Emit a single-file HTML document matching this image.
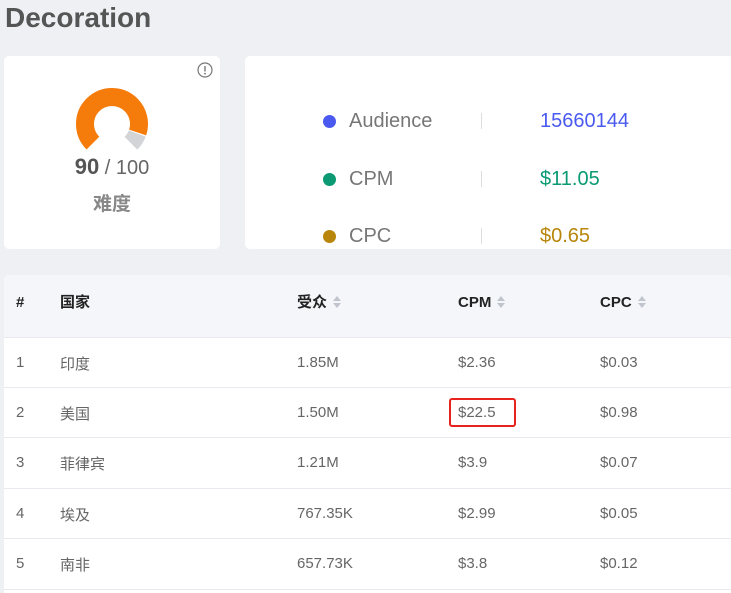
<!DOCTYPE html>
<html><head><meta charset="utf-8"><style>
*{margin:0;padding:0;box-sizing:border-box}
html,body{width:731px;height:593px;overflow:hidden}
body{background:#eef0f4;font-family:"Liberation Sans","Noto Sans CJK SC",sans-serif;position:relative;color:#555}
.abs{position:absolute}
.card{position:absolute;background:#fff;border-radius:5px}
h1{position:absolute;left:5px;top:2px;font-size:28px;font-weight:bold;color:#555;line-height:32px}
.lab{position:absolute;left:104px;font-size:20px;color:#777;line-height:24px}
.dot{position:absolute;left:78px;width:13px;height:13px;border-radius:50%}
.sep{position:absolute;left:236px;width:1px;height:16px;background:#ddd}
.val{position:absolute;left:295px;font-size:20px;line-height:24px}
.row{position:absolute;left:0;width:727px;height:50px;border-top:1px solid #e8eaf0;font-size:15px;color:#666}
.row span,.hd span{position:absolute;top:15px;line-height:20px}
.row span.c{top:17px}
.hd{position:absolute;left:0;top:0;width:727px;height:62px;background:#f5f6fa;border-radius:5px 5px 0 0;font-size:15px;font-weight:bold;color:#222}
.hd span{top:18px}
.sort{display:inline-block;vertical-align:middle;margin-left:5px;width:10px;height:14px;position:relative;top:-1px}
</style></head><body>
<h1>Decoration</h1>
<div class="card" style="left:4px;top:56px;width:216px;height:193px">
 <svg class="abs" style="left:193px;top:6px" width="16" height="16" viewBox="0 0 16 16"><circle cx="8" cy="8" r="7" fill="none" stroke="#777" stroke-width="1.2"/><line x1="8" y1="4" x2="8" y2="9.5" stroke="#777" stroke-width="1.4"/><circle cx="8" cy="11.7" r="0.9" fill="#777"/></svg>
 <svg class="abs" style="left:71px;top:31px" width="74" height="74" viewBox="0 0 74 74">
  <g transform="rotate(135 37 37)">
   <circle cx="37" cy="37" r="27" fill="none" stroke="#f57c0a" stroke-width="18" stroke-dasharray="114.5 300"/>
   <circle cx="37" cy="37" r="27" fill="none" stroke="#d3d4d8" stroke-width="18" stroke-dasharray="0 115.5 11.7 300"/>
  </g>
 </svg>
 <div class="abs" style="left:0;width:216px;top:99px;text-align:center;font-size:20px;color:#666;line-height:24px"><b style="font-size:22px;color:#555">90</b> / 100</div>
 <div class="abs" style="left:0;width:216px;top:137px;text-align:center;font-size:19px;font-weight:bold;color:#888;line-height:24px">难度</div>
</div>
<div class="card" style="left:245px;top:56px;width:486px;height:193px;border-radius:5px 0 0 5px">
 <div class="dot" style="top:59px;background:#4a5af0"></div><div class="lab" style="top:53px">Audience</div><div class="sep" style="top:57px"></div><div class="val" style="top:53px;color:#4a5af0">15660144</div>
 <div class="dot" style="top:117px;background:#0b9a73"></div><div class="lab" style="top:111px">CPM</div><div class="sep" style="top:115px"></div><div class="val" style="top:111px;color:#0b9a73">$11.05</div>
 <div class="dot" style="top:174px;background:#b8860b"></div><div class="lab" style="top:168px">CPC</div><div class="sep" style="top:172px"></div><div class="val" style="top:168px;color:#b8860b">$0.65</div>
</div>
<div class="card" style="left:4px;top:275px;width:727px;height:318px;border-radius:5px 5px 0 0;overflow:hidden">
 <div class="hd"><span style="left:12px">#</span><span style="left:56px">国家</span>
  <span style="left:293px">受众<svg class="sort" viewBox="0 0 10 14"><path d="M1 6L5 1L9 6Z M1 8L5 13L9 8Z" fill="#c0c4cc"/></svg></span>
  <span style="left:454px">CPM<svg class="sort" viewBox="0 0 10 14"><path d="M1 6L5 1L9 6Z M1 8L5 13L9 8Z" fill="#c0c4cc"/></svg></span>
  <span style="left:596px">CPC<svg class="sort" viewBox="0 0 10 14"><path d="M1 6L5 1L9 6Z M1 8L5 13L9 8Z" fill="#c0c4cc"/></svg></span></div>
 <div class="row" style="top:62px"><span style="left:12px">1</span><span class="c" style="left:56px">印度</span><span style="left:293px">1.85M</span><span style="left:454px">$2.36</span><span style="left:596px">$0.03</span></div>
 <div class="row" style="top:112px"><span style="left:12px">2</span><span class="c" style="left:56px">美国</span><span style="left:293px">1.50M</span><span style="left:454px">$22.5</span><span style="left:596px">$0.98</span>
  <div class="abs" style="left:445px;top:10px;width:67px;height:29px;border:2.5px solid #e8231e;border-radius:3px"></div></div>
 <div class="row" style="top:162px"><span style="left:12px">3</span><span class="c" style="left:56px">菲律宾</span><span style="left:293px">1.21M</span><span style="left:454px">$3.9</span><span style="left:596px">$0.07</span></div>
 <div class="row" style="top:213px"><span style="left:12px">4</span><span class="c" style="left:56px">埃及</span><span style="left:293px">767.35K</span><span style="left:454px">$2.99</span><span style="left:596px">$0.05</span></div>
 <div class="row" style="top:263px;height:51px"><span style="left:12px">5</span><span class="c" style="left:56px">南非</span><span style="left:293px">657.73K</span><span style="left:454px">$3.8</span><span style="left:596px">$0.12</span></div>
 <div class="abs" style="left:0;top:314px;width:727px;height:1px;background:#e8eaf0"></div>
</div>
</body></html>
